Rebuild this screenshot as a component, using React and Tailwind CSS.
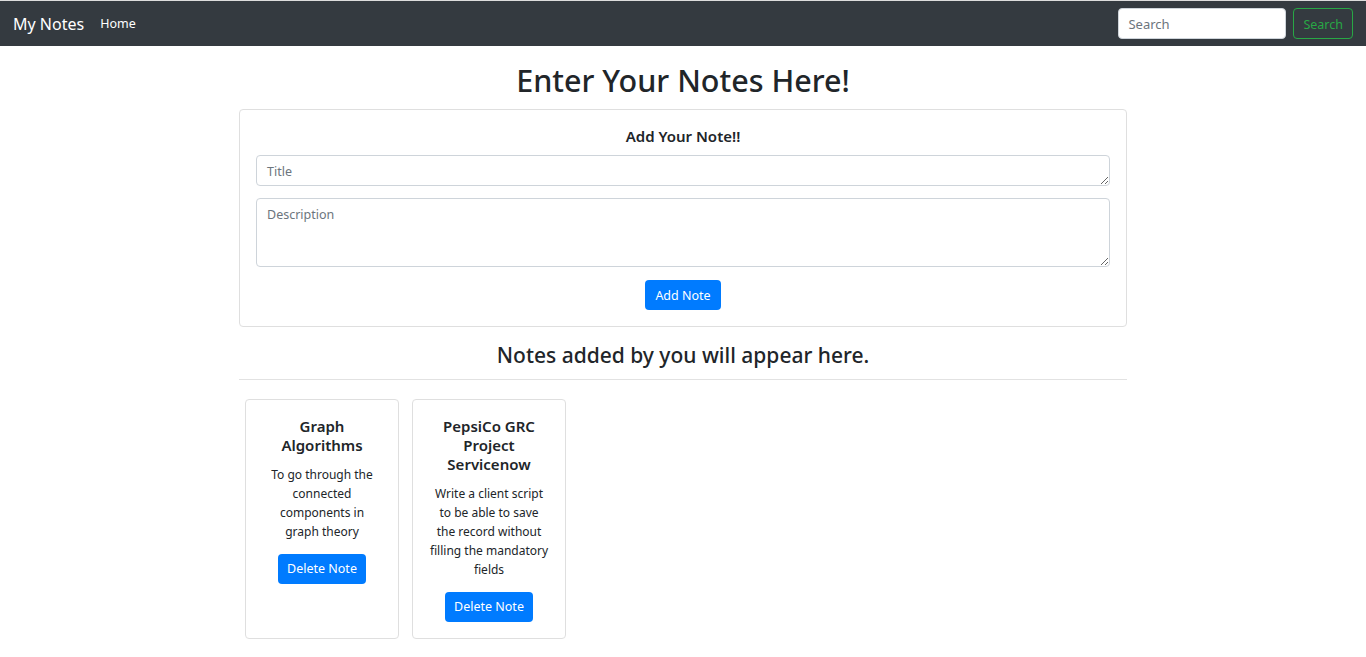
const notes = [
    {
        title: ["Graph", "Algorithms"],
        body: ["To go through the", "connected", "components in", "graph theory"]
    },
    {
        title: ["PepsiCo GRC", "Project", "Servicenow"],
        body: ["Write a client script", "to be able to save", "the record without", "filling the mandatory", "fields"]
    }
];

function Navbar() {
    return (
        <nav className="h-[46px] border-t border-[#dcdcdc] bg-[#343a40] flex items-center justify-between pl-[13px] pr-[13px]">
            <div className="flex items-center">
                <span className="text-white text-[16px] leading-[24px] mr-[16px]">My Notes</span>
                <span className="text-white text-[12.5px] leading-[20px] pt-[1px]">Home</span>
            </div>
            <div className="flex items-center gap-[7px]">
                <input
                    className="w-[168px] h-[31px] rounded-[4px] bg-white border border-[#ced4da] px-[9px] text-[13px] text-[#495057] placeholder:text-[#6c757d] outline-none"
                    placeholder="Search"
                />
                <button className="h-[31px] px-[9px] rounded-[4px] border border-[#28a745] text-[#28a745] text-[12.5px] leading-[31px]">
                    Search
                </button>
            </div>
        </nav>
    );
}

function NoteCard({ note }) {
    return (
        <div className="w-[154px] border border-[#dfdfdf] rounded-[4px] px-[10px] pt-[17px] pb-[16px] flex flex-col items-center text-center">
            <h5 className="text-[15px] font-semibold leading-[19px] text-[#212529]">
                {note.title.map((t) => (
                    <div key={t} className="whitespace-nowrap">{t}</div>
                ))}
            </h5>
            <p className="mt-[10px] text-[12px] leading-[19px] text-[#212529]">
                {note.body.map((t) => (
                    <span key={t} className="block whitespace-nowrap">{t}</span>
                ))}
            </p>
            <button className="mt-[13px] h-[30px] px-[9px] rounded-[4px] bg-[#007bff] text-white text-[12.5px] leading-[30px]">
                Delete Note
            </button>
        </div>
    );
}

export default function App() {
    return (
        <div className="min-h-[657px] bg-white text-[#212529] font-['Noto_Sans',sans-serif]">
            <Navbar />

            <main className="w-[888px] mx-auto">
                <h1 className="text-center text-[30.5px] font-medium leading-[42px] mt-[13px] mb-[8px]">
                    Enter Your Notes Here!
                </h1>

                <div className="border border-[#dfdfdf] rounded-[4px] px-[16px] pt-[14px] pb-[16px] flex flex-col items-center">
                    <h5 className="text-[15px] font-semibold leading-[24px] mb-[7px]">
                        Add Your Note!!
                    </h5>
                    <textarea
                        rows={1}
                        className="w-full h-[31px] border border-[#ced4da] rounded-[4px] px-[10px] py-[6px] text-[12.5px] leading-[19px] placeholder:text-[#6c757d] outline-none"
                        placeholder="Title"
                    />
                    <textarea
                        rows={3}
                        className="mt-[12px] w-full h-[69px] border border-[#ced4da] rounded-[4px] px-[10px] py-[6px] text-[12.5px] leading-[19px] placeholder:text-[#6c757d] outline-none"
                        placeholder="Description"
                    />
                    <button className="mt-[13px] h-[30px] px-[10px] rounded-[4px] bg-[#007bff] text-white text-[12.5px] leading-[31px]">
                        Add Note
                    </button>
                </div>

                <h3 className="text-center text-[21px] font-medium leading-[30px] mt-[13px] mb-[9px]">
                    Notes added by you will appear here.
                </h3>
                <hr className="border-t border-[#e2e2e2]" />

                <div className="flex gap-[13px] px-[6px] mt-[19px]">
                    {notes.map((n) => (
                        <NoteCard key={n.title.join(" ")} note={n} />
                    ))}
                </div>
            </main>
        </div>
    );
}
